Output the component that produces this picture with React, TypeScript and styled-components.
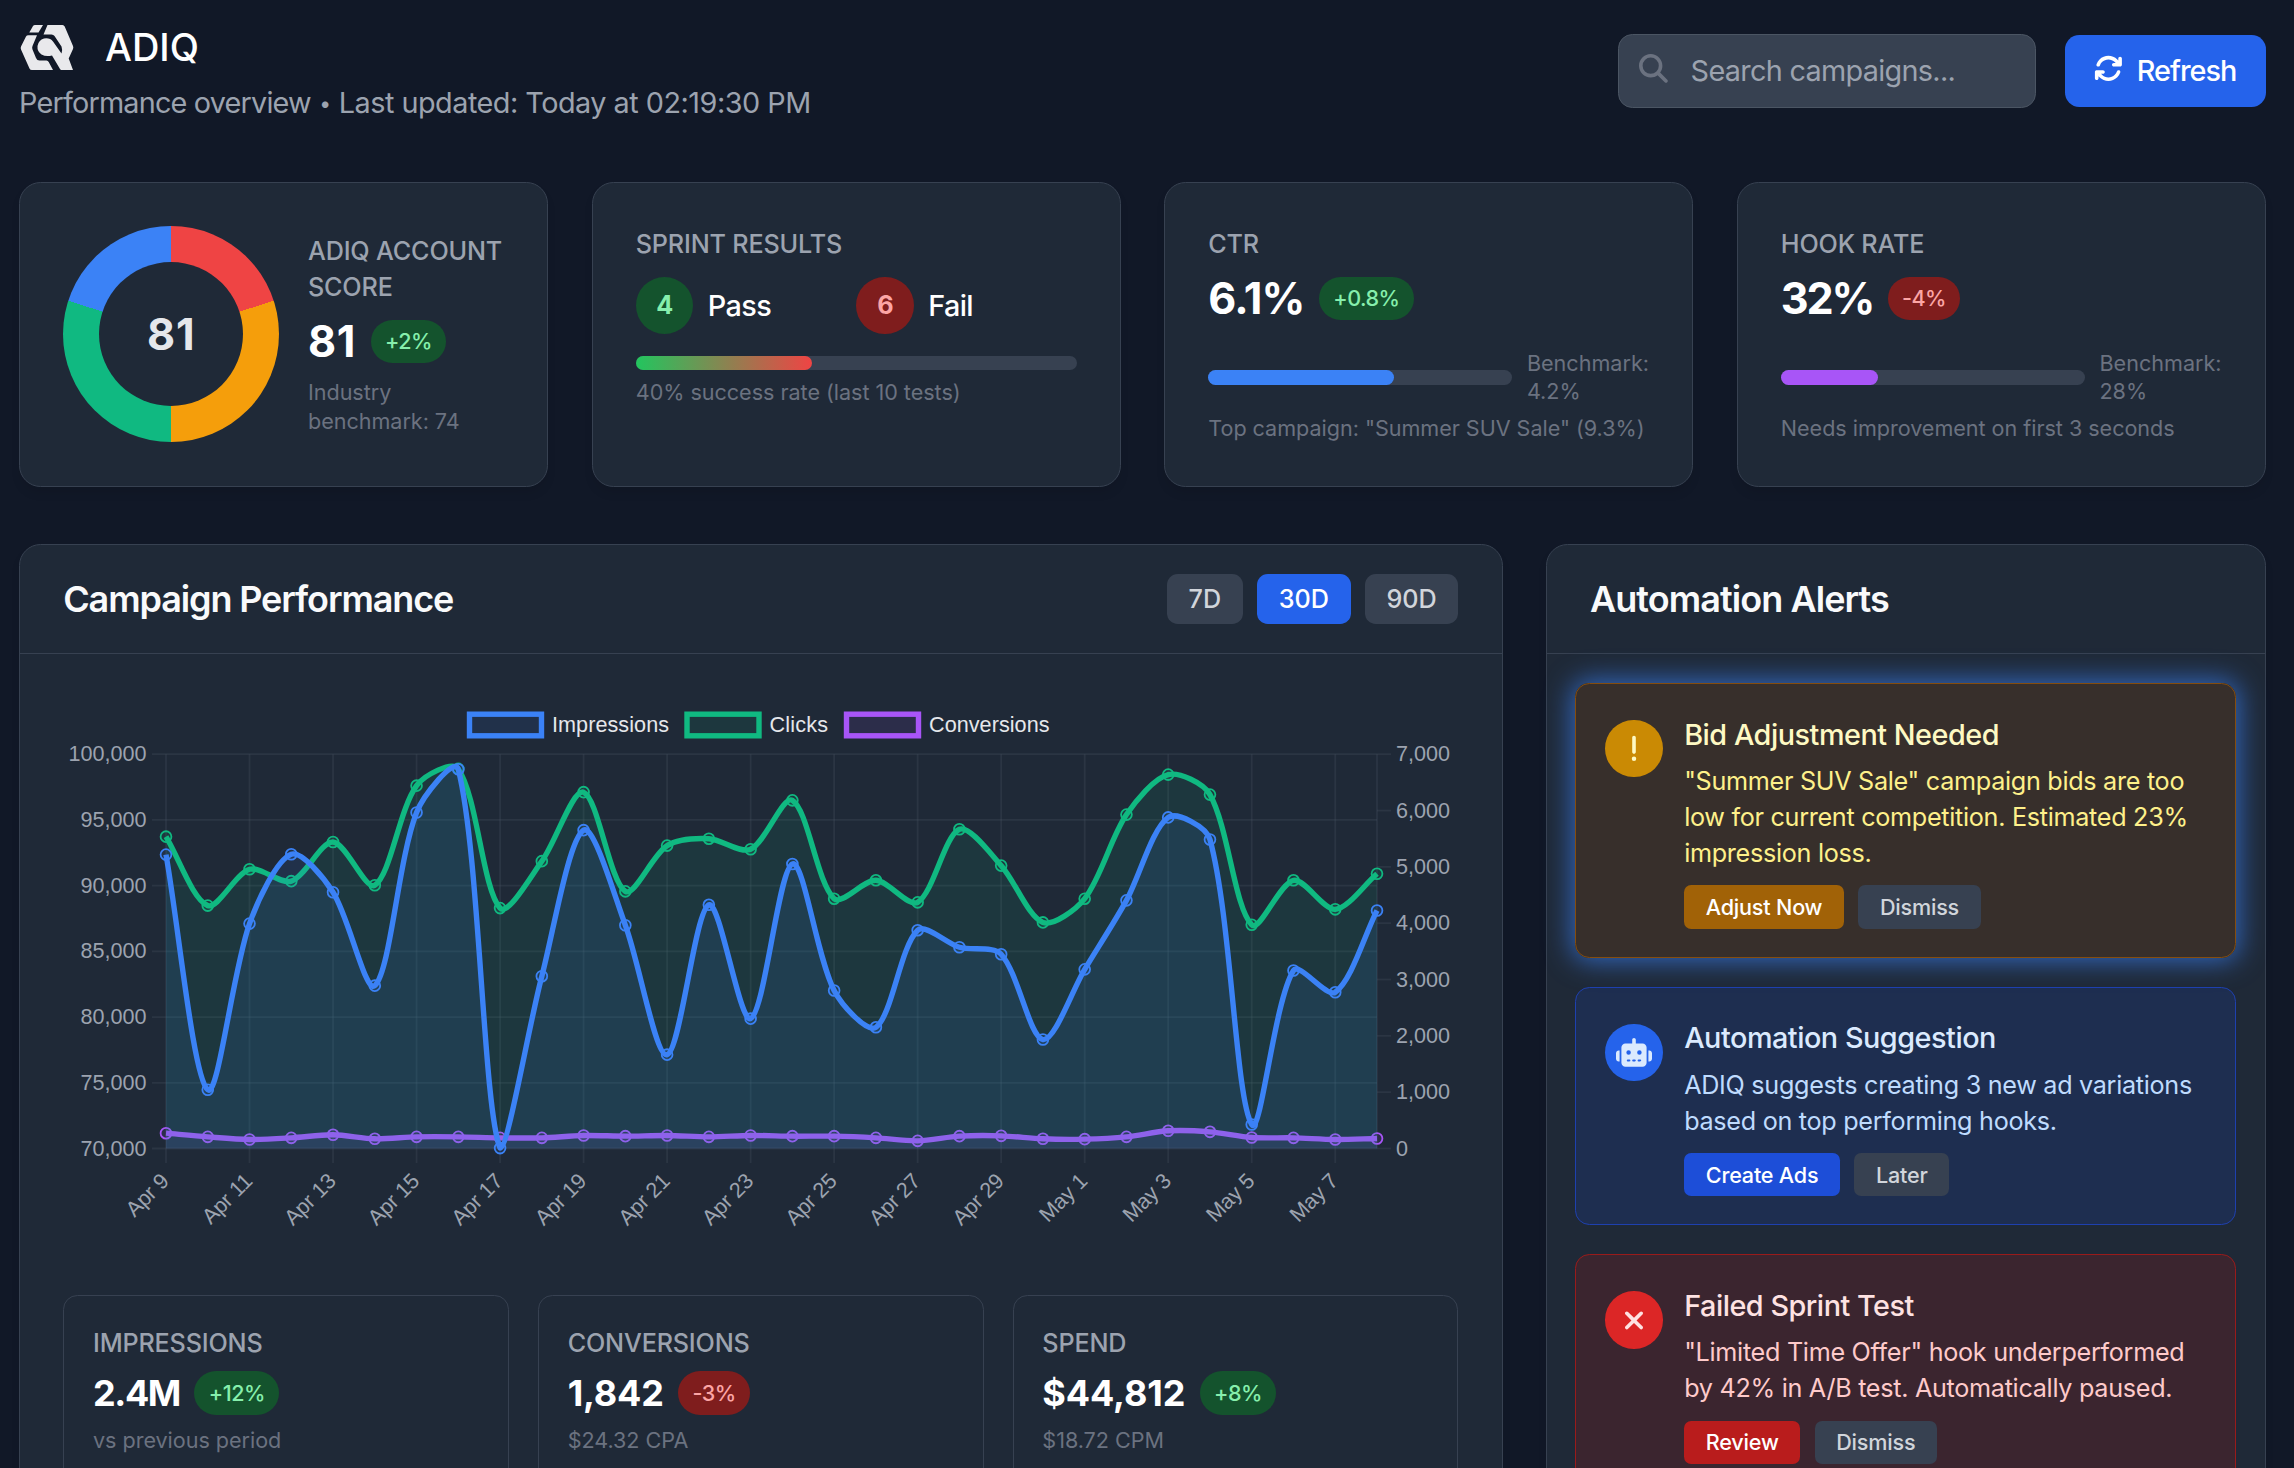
import React from "react";
import styled, { createGlobalStyle } from "styled-components";
import { FaArrowsRotate, FaExclamation, FaMagnifyingGlass, FaRobot, FaXmark } from "react-icons/fa6";

const GlobalStyle = createGlobalStyle`
  *, *::before, *::after { box-sizing: border-box; }
  html, body { margin: 0; padding: 0; height: 1468px; overflow: hidden; }
  body {
    background: #111827;
    color: #f3f4f6;
    font-family: Inter, "Liberation Sans", sans-serif;
    font-size: 28.8px;
    line-height: 43.2px;
    -webkit-font-smoothing: antialiased;
  }
  h1, h2, h3, p { margin: 0; }
  button, input { font-family: inherit; }
`;

const Page = styled.div`
  width: 2294px;
  height: 1468px;
  overflow: hidden;
  padding: 21px 28px 0 19px;
`;

/* ---------- header ---------- */

const Header = styled.header`
  display: flex;
  justify-content: space-between;
  height: 161px;
`;

const Brand = styled.div`
  display: flex;
  flex-direction: column;
`;

const BrandRow = styled.div`
  display: flex;
  align-items: center;
  height: 52px;
  gap: 30px;
`;

const BrandName = styled.h1`
  font-size: 38px;
  line-height: 52px;
  font-weight: 500;
  color: #fff;
`;

const Subtitle = styled.p`
  margin-top: 8px;
  font-size: 28.8px;
  line-height: 43.2px;
  letter-spacing: -0.5px;
  color: #9ca3af;
  white-space: nowrap;
`;

const Overview = styled.span`
  letter-spacing: -0.8px;
`;

const Dot = styled.span`
  margin: 0 0.7px;
  font-size: 21px;
  vertical-align: 2px;
`;

const Actions = styled.div`
  display: flex;
  align-items: center;
  align-self: flex-start;
  gap: 28.8px;
  margin-top: 13px;
`;

const SearchBox = styled.label`
  display: flex;
  align-items: center;
  gap: 23px;
  width: 418px;
  height: 74px;
  padding: 0 19.6px;
  border: 1px solid #4b5563;
  border-radius: 14.4px;
  background: #374151;
  svg {
    flex: none;
    width: 28.8px;
    height: 28.8px;
    margin-top: -5px;
    color: #6b7280;
  }
`;

const SearchInput = styled.input`
  flex: 1;
  min-width: 0;
  border: 0;
  outline: 0;
  padding: 0;
  background: transparent;
  color: #fff;
  font-size: 28.8px;
  line-height: 43.2px;
  letter-spacing: -0.69px;
  &::placeholder { color: #9ca3af; opacity: 1; }
`;

const RefreshButton = styled.button`
  display: flex;
  align-items: center;
  justify-content: center;
  gap: 14.4px;
  width: 201px;
  height: 72px;
  padding: 0 7px 2px 6px;
  border: 0;
  border-radius: 14.4px;
  background: #2563eb;
  color: #fff;
  font-size: 28.8px;
  font-weight: 500;
  letter-spacing: -0.95px;
  svg { width: 28.8px; height: 28.8px; margin-top: -3px; }
`;

/* ---------- shared pieces ---------- */

const Card = styled.section`
  border: 1px solid #374151;
  border-radius: 21.6px;
  background: #1f2937;
  box-shadow: 0 7px 11px -2px rgba(0, 0, 0, 0.1);
`;

const Label = styled.h3`
  font-size: 25.2px;
  line-height: 36px;
  font-weight: 500;
  letter-spacing: -0.18px;
  color: #9ca3af;
  white-space: pre;
`;

const ValueRow = styled.div<{ $small?: boolean }>`
  display: flex;
  align-items: center;
  gap: 14.4px;
  margin-top: 7.2px;
  height: ${(p) => (p.$small ? "50.4px" : "57.6px")};
`;

const Value = styled.span<{ $small?: boolean; $spacing?: number }>`
  font-size: ${(p) => (p.$small ? "36px" : "43.2px")};
  line-height: 1;
  font-weight: 700;
  letter-spacing: ${(p) => p.$spacing ?? 0}px;
  color: #fff;
`;

type Tone = "up" | "down";

const Badge = styled.span<{ $tone: Tone }>`
  padding: 7.2px 14.4px;
  border-radius: 22px;
  font-size: 21.6px;
  line-height: 28.8px;
  font-weight: 500;
  letter-spacing: -0.5px;
  background: ${(p) => (p.$tone === "up" ? "#14532d" : "#7f1d1d")};
  color: ${(p) => (p.$tone === "up" ? "#86efac" : "#fca5a5")};
`;

const Note = styled.p`
  margin-top: 7.8px;
  font-size: 21.6px;
  line-height: 28.8px;
  letter-spacing: -0.04px;
  color: #6b7280;
  white-space: pre-line;
`;

const Track = styled.div`
  flex: 1;
  height: 14.4px;
  border-radius: 8px;
  background: #374151;
`;

const Fill = styled.div<{ $paint: string }>`
  height: 100%;
  border-radius: 8px;
  background: ${(p) => p.$paint};
`;

/* ---------- summary cards ---------- */

const StatGrid = styled.div`
  display: grid;
  grid-template-columns: repeat(4, 1fr);
  gap: 43.2px;
`;

const StatCard = styled(Card)`
  height: 304.6px;
  padding: 43.2px;
`;

const ScoreCard = styled(StatCard)`
  display: flex;
  align-items: center;
  gap: 28.8px;
`;

const Donut = styled.div`
  display: grid;
  place-items: center;
  flex: none;
  width: 216px;
  height: 216px;
  border-radius: 50%;
  background: conic-gradient(#ef4444 0 20%, #f59e0b 20% 50%, #10b981 50% 80%, #3b82f6 80% 100%);
`;

const DonutHole = styled.div`
  display: grid;
  place-items: center;
  width: 144px;
  height: 144px;
  border-radius: 50%;
  background: #1f2937;
  color: #e5e7eb;
  font-size: 43.2px;
  font-weight: 700;
  letter-spacing: 0.7px;
`;

const SprintRow = styled.div`
  display: grid;
  grid-template-columns: 1fr 1fr;
  margin: 14.4px 0 21.6px;
`;

const SprintItem = styled.div`
  display: flex;
  align-items: center;
  gap: 14.4px;
  font-weight: 500;
  letter-spacing: -0.6px;
  color: #fff;
`;

const Count = styled.span<{ $tone: Tone }>`
  display: grid;
  place-items: center;
  width: 57.6px;
  height: 57.6px;
  border-radius: 50%;
  font-size: 25.2px;
  font-weight: 700;
  background: ${(p) => (p.$tone === "up" ? "#14532d" : "#7f1d1d")};
  color: ${(p) => (p.$tone === "up" ? "#86efac" : "#fca5a5")};
`;

const BenchmarkRow = styled.div`
  display: flex;
  align-items: center;
  gap: 14.4px;
  margin-top: 21.6px;
`;

const Benchmark = styled.span`
  flex: none;
  width: 122.4px;
  font-size: 21.6px;
  line-height: 28.8px;
  color: #6b7280;
`;

/* ---------- panels ---------- */

const MainGrid = styled.div`
  display: grid;
  grid-template-columns: 1483.6px 1fr;
  gap: 43.2px;
  margin-top: 57.4px;
`;

const Panel = styled(Card)`
  height: 1100px;
`;

const PanelHeader = styled.div`
  display: flex;
  align-items: center;
  justify-content: space-between;
  height: 109px;
  padding: 0 43.2px;
  border-bottom: 1px solid #374151;
`;

const PanelTitle = styled.h2<{ $spacing: number }>`
  font-size: 36px;
  line-height: 50.4px;
  font-weight: 600;
  letter-spacing: ${(p) => p.$spacing}px;
  color: #f9fafb;
`;

const Ranges = styled.div`
  display: flex;
  gap: 14.4px;
`;

const RangeButton = styled.button<{ $active?: boolean }>`
  height: 50.4px;
  padding: 0 21.6px;
  border: 0;
  border-radius: 10.8px;
  font-size: 25.2px;
  font-weight: 500;
  background: ${(p) => (p.$active ? "#2563eb" : "#374151")};
  color: ${(p) => (p.$active ? "#fff" : "#d1d5db")};
`;

const PanelBody = styled.div`
  padding: 43.2px;
`;

const ChartSvg = styled.svg`
  display: block;
  width: 1395px;
  height: 555px;
  margin-bottom: 42.6px;
  overflow: visible;
  font-family: "Liberation Sans", Arial, sans-serif;
  font-size: 21.6px;
`;

const MetricGrid = styled.div`
  display: grid;
  grid-template-columns: repeat(3, 1fr);
  gap: 28.8px;
`;

const Metric = styled.div`
  padding: 28.8px;
  border: 1px solid #374151;
  border-radius: 14.4px;
  height: 200px;
`;

/* ---------- alerts ---------- */

const AlertList = styled.div`
  display: flex;
  flex-direction: column;
  gap: 28.8px;
  padding: 28.8px 28.8px 28.8px 28.4px;
`;

interface Palette {
  bg: string;
  border: string;
  icon: string;
  title: string;
  text: string;
  action: string;
}

const AlertCard = styled.article<{ $p: Palette; $glow?: boolean }>`
  display: flex;
  align-items: flex-start;
  gap: 21.6px;
  padding: 28.8px 28.8px 28.2px;
  border: 1px solid ${(a) => a.$p.border};
  border-radius: 14.4px;
  background: ${(a) => a.$p.bg};
  box-shadow: ${(a) => (a.$glow ? "0 0 27px 3px rgba(59, 130, 246, 0.7)" : "none")};
`;

const AlertIcon = styled.span<{ $p: Palette }>`
  display: grid;
  place-items: center;
  flex: none;
  width: 57.6px;
  height: 57.6px;
  margin-top: 7.2px;
  border-radius: 50%;
  background: ${(a) => a.$p.icon};
  color: ${(a) => a.$p.title};
  svg { width: 36px; height: 28.8px; }
`;

const AlertTitle = styled.h3<{ $p: Palette }>`
  font-size: 28.8px;
  line-height: 43.2px;
  font-weight: 500;
  letter-spacing: -0.48px;
  color: ${(a) => a.$p.title};
`;

const AlertText = styled.p<{ $p: Palette }>`
  margin: 7.2px 0 14.4px;
  font-size: 25.2px;
  line-height: 36px;
  letter-spacing: -0.3px;
  color: ${(a) => a.$p.text};
  white-space: pre;
`;

const AlertActions = styled.div`
  display: flex;
  gap: 14.4px;
`;

const AlertButton = styled.button<{ $bg?: string }>`
  height: 43.2px;
  padding: 0 21.6px;
  border: 0;
  border-radius: 7.2px;
  font-size: 21.6px;
  font-weight: 500;
  letter-spacing: -0.2px;
  background: ${(p) => p.$bg ?? "#374151"};
  color: ${(p) => (p.$bg ? "#fff" : "#d1d5db")};
`;

/* ---------- chart ---------- */

const impressions = [
  92360, 74470, 87110, 92390, 89500, 82390, 95560, 98850, 70030, 83110, 94220, 86990, 77140, 88540, 79880,
  91650, 82020, 79220, 86610, 85310, 84780, 78290, 83630, 88880, 95190, 93510, 71830, 83540, 81890, 88110,
];
const clicks = [
  5536, 4312, 4957, 4746, 5442, 4674, 6442, 6739, 4268, 5101, 6326, 4565, 5377, 5500, 5312,
  6181, 4435, 4761, 4370, 5667, 5022, 4014, 4435, 5928, 6638, 6283, 3971, 4761, 4246, 4877,
];
const conversions = [
  272, 207, 160, 189, 243, 172, 207, 207, 189, 189, 231, 219, 231, 207, 231,
  219, 219, 189, 136, 219, 225, 172, 166, 207, 314, 296, 195, 189, 160, 178,
];
const days = [
  "Apr 9", "Apr 11", "Apr 13", "Apr 15", "Apr 17", "Apr 19", "Apr 21", "Apr 23",
  "Apr 25", "Apr 27", "Apr 29", "May 1", "May 3", "May 5", "May 7",
];

const LEFT = 103;
const RIGHT = 1314;
const TOP = 57.2;
const BOTTOM = 451.5;
const STEP = (RIGHT - LEFT) / 29;

type Point = { x: number; y: number };

const project = (data: number[], min: number, max: number): Point[] =>
  data.map((v, i) => ({ x: LEFT + i * STEP, y: BOTTOM - ((v - min) / (max - min)) * (BOTTOM - TOP) }));

function curve(pts: Point[], tension = 0.3): string {
  const clamp = (y: number) => Math.min(BOTTOM, Math.max(TOP, y));
  const handles = pts.map((c, i) => {
    const a = pts[i - 1] ?? c;
    const b = pts[i + 1] ?? c;
    const d0 = Math.hypot(c.x - a.x, c.y - a.y);
    const d1 = Math.hypot(b.x - c.x, b.y - c.y);
    const f0 = (tension * d0) / (d0 + d1);
    const f1 = (tension * d1) / (d0 + d1);
    return {
      before: { x: c.x - f0 * (b.x - a.x), y: clamp(c.y - f0 * (b.y - a.y)) },
      after: { x: c.x + f1 * (b.x - a.x), y: clamp(c.y + f1 * (b.y - a.y)) },
    };
  });
  return pts.reduce((d, p, i) => {
    if (i === 0) return `M${p.x},${p.y}`;
    const h = handles[i - 1].after;
    const k = handles[i].before;
    return `${d}C${h.x},${h.y} ${k.x},${k.y} ${p.x},${p.y}`;
  }, "");
}

const Series = ({ points, color }: { points: Point[]; color: string }) => {
  const d = curve(points);
  return (
    <g>
      <path d={`${d}L${RIGHT},${BOTTOM}L${LEFT},${BOTTOM}Z`} fill={color} fillOpacity={0.1} />
      <path d={d} fill="none" stroke={color} strokeWidth={5.4} strokeLinejoin="round" />
      {points.map((p) => (
        <circle key={p.x} cx={p.x} cy={p.y} r={5.4} fill={color} fillOpacity={0.1} stroke={color} strokeWidth={1.8} />
      ))}
    </g>
  );
};

const legend = [
  { name: "Impressions", color: "#3b82f6", x: 406.5, tx: 489, w: 117 },
  { name: "Clicks", color: "#10b981", x: 624, tx: 706.5, w: 58.5 },
  { name: "Conversions", color: "#a855f7", x: 783.5, tx: 866, w: 120.5 },
];

const Chart = () => (
  <ChartSvg viewBox="0 0 1395 555">
    {legend.map((l) => (
      <g key={l.name}>
        <rect x={l.x} y={17.2} width={72} height={21.6} fill={l.color} fillOpacity={0.1} stroke={l.color} strokeWidth={5.4} />
        <text x={l.tx} y={35.2} fill="#e5e7eb" textLength={l.w}>{l.name}</text>
      </g>
    ))}
    <g stroke="#4b5563" strokeOpacity={0.28} strokeWidth={1.8}>
      {Array.from({ length: 7 }, (_, i) => {
        const y = TOP + ((BOTTOM - TOP) * i) / 6;
        return <line key={i} x1={LEFT - 14} x2={RIGHT} y1={y} y2={y} />;
      })}
      {Array.from({ length: 8 }, (_, i) => {
        const y = TOP + ((BOTTOM - TOP) * i) / 7;
        return <line key={i} x1={RIGHT} x2={RIGHT + 14} y1={y} y2={y} />;
      })}
      {days.map((d, i) => (
        <line key={d} x1={LEFT + i * 2 * STEP} x2={LEFT + i * 2 * STEP} y1={TOP} y2={BOTTOM + 14.4} />
      ))}
      <line x1={RIGHT} x2={RIGHT} y1={TOP} y2={BOTTOM} />
    </g>
    <g fill="#9ca3af">
      {Array.from({ length: 7 }, (_, i) => (
        <text key={i} x={83.5} y={TOP + ((BOTTOM - TOP) * i) / 6 + 7} textAnchor="end">
          {(100000 - i * 5000).toLocaleString("en-US")}
        </text>
      ))}
      {Array.from({ length: 8 }, (_, i) => (
        <text key={i} x={1333} y={TOP + ((BOTTOM - TOP) * i) / 7 + 7}>
          {(7000 - i * 1000).toLocaleString("en-US")}
        </text>
      ))}
      {days.map((d, i) => (
        <text
          key={d}
          textAnchor="end"
          letterSpacing={-0.25}
          transform={`translate(${LEFT + i * 2 * STEP + 4} 485.5) rotate(-45)`}
        >
          {d}
        </text>
      ))}
    </g>
    <Series points={project(conversions, 0, 7000)} color="#a855f7" />
    <Series points={project(clicks, 0, 7000)} color="#10b981" />
    <Series points={project(impressions, 70000, 100000)} color="#3b82f6" />
  </ChartSvg>
);

/* ---------- content ---------- */

const Logo = () => (
  <svg width="56" height="50" viewBox="0 0 56 50" fill="#e9e9ec">
    <path d="M16 3H24L19.500 10.500H10.300L14 4Q14.600 3 16 3Z" />
    <path d="M28.500 3H43.500Q45 3 45.700 4.500L54 24Q54.600 25.500 54 27L49.700 36.500L54 48H42.500Q41.500 48 41 47L33 33.500Q27 35 22.500 32.500Q18 29.500 18.500 24Q19.500 18 25 16.500Q31 15.500 34 19.500L42.500 31.500Q43.800 28 42.500 24.500L35.500 14Q34.500 12.500 32.500 12.500H24.500Z" />
    <path d="M9.500 13.200H18L13.500 24Q12.800 25.700 13.500 27.500L17 36Q18 38.500 20.500 38.500H27.500Q29 38.500 29.700 40L34 48H13Q11.200 48 10.500 46.500L2 27.500Q1.400 26 2 24.500L7 14.500Q7.600 13.200 9.500 13.200Z" />
  </svg>
);

const metrics: { label: string; value: string; spacing: number; change: string; tone: Tone; note: string }[] = [
  { label: "IMPRESSIONS", value: "2.4M", spacing: -1.4, change: "+12%", tone: "up", note: "vs previous period" },
  { label: "CONVERSIONS", value: "1,842", spacing: -0.2, change: "-3%", tone: "down", note: "$24.32 CPA" },
  { label: "SPEND", value: "$44,812", spacing: -0.1, change: "+8%", tone: "up", note: "$18.72 CPM" },
];

const rates: {
  label: string; value: string; spacing: number; change: string; tone: Tone; fill: number; paint: string; benchmark: string; note: string;
}[] = [
  { label: "CTR", value: "6.1%", spacing: -0.9, change: "+0.8%", tone: "up", fill: 61, paint: "#3b82f6", benchmark: "4.2%", note: 'Top campaign: "Summer SUV Sale" (9.3%)' },
  { label: "HOOK RATE", value: "32%", spacing: -2.2, change: "-4%", tone: "down", fill: 32, paint: "#a855f7", benchmark: "28%", note: "Needs improvement on first 3 seconds" },
];

const alerts = [
  {
    title: "Bid Adjustment Needed",
    text: '"Summer SUV Sale" campaign bids are too\nlow for current competition. Estimated 23%\nimpression loss.',
    action: "Adjust Now",
    dismiss: "Dismiss",
    icon: <FaExclamation />,
    glow: true,
    palette: { bg: "rgba(113,63,18,.3)", border: "#854d0e", icon: "#ca8a04", title: "#fef9c3", text: "#fef08a", action: "#a16207" },
  },
  {
    title: "Automation Suggestion",
    text: "ADIQ suggests creating 3 new ad variations\nbased on top performing hooks.",
    action: "Create Ads",
    dismiss: "Later",
    icon: <FaRobot />,
    glow: false,
    palette: { bg: "rgba(30,58,138,.3)", border: "#1e40af", icon: "#2563eb", title: "#dbeafe", text: "#bfdbfe", action: "#1d4ed8" },
  },
  {
    title: "Failed Sprint Test",
    text: '"Limited Time Offer" hook underperformed\nby 42% in A/B test. Automatically paused.',
    action: "Review",
    dismiss: "Dismiss",
    icon: <FaXmark />,
    glow: false,
    palette: { bg: "rgba(127,29,29,.3)", border: "#991b1b", icon: "#dc2626", title: "#fee2e2", text: "#fecaca", action: "#b91c1c" },
  },
];

export default function App() {
  return (
    <Page>
      <GlobalStyle />
      <Header>
        <Brand>
          <BrandRow>
            <Logo />
            <BrandName>ADIQ</BrandName>
          </BrandRow>
          <Subtitle>
            <Overview>Performance overview</Overview> <Dot>•</Dot> Last updated: Today at 02:19:30 PM
          </Subtitle>
        </Brand>
        <Actions>
          <SearchBox>
            <FaMagnifyingGlass />
            <SearchInput placeholder="Search campaigns..." />
          </SearchBox>
          <RefreshButton>
            <FaArrowsRotate />
            Refresh
          </RefreshButton>
        </Actions>
      </Header>

      <StatGrid>
        <ScoreCard>
          <Donut>
            <DonutHole>81</DonutHole>
          </Donut>
          <div>
            <Label>{"ADIQ ACCOUNT\nSCORE"}</Label>
            <ValueRow>
              <Value $spacing={0.7}>81</Value>
              <Badge $tone="up">+2%</Badge>
            </ValueRow>
            <Note>{"Industry\nbenchmark: 74"}</Note>
          </div>
        </ScoreCard>
        <StatCard>
          <Label>SPRINT RESULTS</Label>
          <SprintRow>
            <SprintItem>
              <Count $tone="up">4</Count>Pass
            </SprintItem>
            <SprintItem>
              <Count $tone="down">6</Count>Fail
            </SprintItem>
          </SprintRow>
          <Track>
            <Fill $paint="linear-gradient(90deg, #22c55e, #ef4444)" style={{ width: "40%" }} />
          </Track>
          <Note>40% success rate (last 10 tests)</Note>
        </StatCard>
        {rates.map((r) => (
          <StatCard key={r.label}>
            <Label>{r.label}</Label>
            <ValueRow>
              <Value $spacing={r.spacing}>{r.value}</Value>
              <Badge $tone={r.tone}>{r.change}</Badge>
            </ValueRow>
            <BenchmarkRow>
              <Track>
                <Fill $paint={r.paint} style={{ width: `${r.fill}%` }} />
              </Track>
              <Benchmark>Benchmark: {r.benchmark}</Benchmark>
            </BenchmarkRow>
            <Note>{r.note}</Note>
          </StatCard>
        ))}
      </StatGrid>

      <MainGrid>
        <Panel>
          <PanelHeader>
            <PanelTitle $spacing={-1.12}>Campaign Performance</PanelTitle>
            <Ranges>
              <RangeButton>7D</RangeButton>
              <RangeButton $active>30D</RangeButton>
              <RangeButton>90D</RangeButton>
            </Ranges>
          </PanelHeader>
          <PanelBody>
            <Chart />
            <MetricGrid>
              {metrics.map((m) => (
                <Metric key={m.label}>
                  <Label>{m.label}</Label>
                  <ValueRow $small>
                    <Value $small $spacing={m.spacing}>{m.value}</Value>
                    <Badge $tone={m.tone}>{m.change}</Badge>
                  </ValueRow>
                  <Note>{m.note}</Note>
                </Metric>
              ))}
            </MetricGrid>
          </PanelBody>
        </Panel>

        <Panel>
          <PanelHeader>
            <PanelTitle $spacing={-0.93}>Automation Alerts</PanelTitle>
          </PanelHeader>
          <AlertList>
            {alerts.map((a) => (
              <AlertCard key={a.title} $p={a.palette} $glow={a.glow}>
                <AlertIcon $p={a.palette}>{a.icon}</AlertIcon>
                <div>
                  <AlertTitle $p={a.palette}>{a.title}</AlertTitle>
                  <AlertText $p={a.palette}>{a.text}</AlertText>
                  <AlertActions>
                    <AlertButton $bg={a.palette.action}>{a.action}</AlertButton>
                    <AlertButton>{a.dismiss}</AlertButton>
                  </AlertActions>
                </div>
              </AlertCard>
            ))}
          </AlertList>
        </Panel>
      </MainGrid>
    </Page>
  );
}
